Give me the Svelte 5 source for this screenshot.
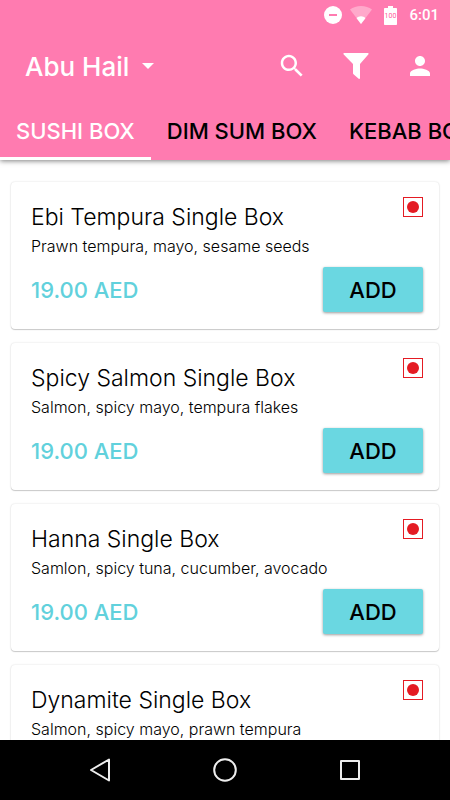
<script lang="ts">
  type MenuItem = {
    id: number;
    name: string;
    description: string;
    price: number;
  };

  const location = 'Abu Hail';
  const tabs = ['SUSHI BOX', 'DIM SUM BOX', 'KEBAB BOX'];

  const items: MenuItem[] = [
    { id: 1, name: 'Ebi Tempura Single Box', description: 'Prawn tempura, mayo, sesame seeds', price: 19 },
    { id: 2, name: 'Spicy Salmon Single Box', description: 'Salmon, spicy mayo, tempura flakes', price: 19 },
    { id: 3, name: 'Hanna Single Box', description: 'Samlon, spicy tuna, cucumber, avocado', price: 19 },
    { id: 4, name: 'Dynamite Single Box', description: 'Salmon, spicy mayo, prawn tempura', price: 19 },
  ];

  let activeTab = $state(0);
  let cart = $state<number[]>([]);

  const addToCart = (id: number): void => {
    cart.push(id);
  };
</script>

<div class="screen">
  <header class="header">
    <div class="status-bar">
      <svg width="18" height="18" viewBox="0 0 18 18" aria-hidden="true">
        <circle cx="9" cy="9" r="9" fill="#fff" />
        <rect x="5" y="8" width="8" height="2" fill="#ff7bb0" />
      </svg>
      <svg width="22" height="18" viewBox="0 0 22 18" aria-hidden="true">
        <path d="M0 3.6C3 1.2 6.8 0 11 0s8 1.2 11 3.6L11 18z" fill="#fff" opacity=".35" />
        <path d="M6.6 12.2C7.7 11 9.300 10.3 11 10.3s3.3.7 4.4 1.9L11 18z" fill="#fff" />
      </svg>
      <svg class="battery" width="13" height="19" viewBox="0 0 13 19" aria-hidden="true">
        <path d="M4 0h5v2h3c.6 0 1 .4 1 1v15c0 .6-.4 1-1 1H1c-.6 0-1-.4-1-1V3c0-.6.4-1 1-1h3z" fill="#fff" />
        <text x="6.5" y="12" text-anchor="middle" font-size="7" fill="#ff5c9c">100</text>
      </svg>
      <span class="time">6:01</span>
    </div>

    <div class="app-bar">
      <button class="location">
        {location}
        <svg width="12" height="6" viewBox="0 0 12 6" aria-hidden="true">
          <path d="M0 0h12L6 6z" fill="#fff" />
        </svg>
      </button>
      <div class="actions">
        <button class="icon-btn" aria-label="Search">
          <svg width="30" height="30" viewBox="0 0 24 24" fill="#fff">
            <path d="M15.5 14h-.79l-.28-.27C15.41 12.59 16 11.11 16 9.5 16 5.91 13.09 3 9.5 3S3 5.91 3 9.5 5.91 16 9.5 16c1.61 0 3.09-.59 4.23-1.57l.27.28v.79l5 4.99L20.49 19l-4.99-5zm-6 0C7.01 14 5 11.99 5 9.5S7.01 5 9.5 5 14 7.01 14 9.5 11.99 14 9.5 14z" />
          </svg>
        </button>
        <button class="icon-btn" aria-label="Filter">
          <svg width="26" height="26" viewBox="0 0 26 26" fill="#fff">
            <path d="M1.200 0h23.600c.9 0 1.100.8.5 1.400L17 11v14c0 .8-.7 1.200-1.300.7l-5.200-4.500c-.3-.3-.5-.6-.5-1V11L.7 1.400C.1.800.3 0 1.200 0z" />
          </svg>
        </button>
        <button class="icon-btn" aria-label="Account">
          <svg width="30" height="30" viewBox="0 0 24 24" fill="#fff">
            <path d="M12 12c2.21 0 4-1.79 4-4s-1.79-4-4-4-4 1.79-4 4 1.79 4 4 4zm0 2c-2.67 0-8 1.34-8 4v2h16v-2c0-2.66-5.33-4-8-4z" />
          </svg>
        </button>
      </div>
    </div>

    <div class="tabs" role="tablist">
      {#each tabs as tab, i}
        <button
          class="tab"
          class:active={i === activeTab}
          role="tab"
          aria-selected={i === activeTab}
          onclick={() => (activeTab = i)}
        >
          {tab}
        </button>
      {/each}
    </div>
  </header>

  <main class="menu">
    {#each items as item (item.id)}
      <article class="card">
        <div class="card-top">
          <div>
            <h2 class="name">{item.name}</h2>
            <p class="description">{item.description}</p>
          </div>
          <svg width="20" height="20" viewBox="0 0 20 20" role="img" aria-label="Non-vegetarian">
            <rect x=".5" y=".5" width="19" height="19" fill="#fff" stroke="#e41b23" />
            <circle cx="10" cy="10" r="6" fill="#e41b23" />
          </svg>
        </div>
        <div class="card-bottom">
          <span class="price">{item.price.toFixed(2)} AED</span>
          <button class="add-btn" onclick={() => addToCart(item.id)}>ADD</button>
        </div>
      </article>
    {/each}
  </main>

  <nav class="nav-bar">
    <button aria-label="Back">
      <svg width="24" height="24" viewBox="0 0 24 24">
        <path d="M21 1.5v21L3 12z" />
      </svg>
    </button>
    <button aria-label="Home">
      <svg width="24" height="24" viewBox="0 0 24 24">
        <circle cx="12" cy="12" r="10.8" />
      </svg>
    </button>
    <button aria-label="Recent apps">
      <svg width="24" height="24" viewBox="0 0 24 24">
        <rect x="3" y="3" width="18" height="18" />
      </svg>
    </button>
  </nav>
</div>

<style>
  :global(body) {
    margin: 0;
    background: #fff;
  }

  .screen {
    display: flex;
    flex-direction: column;
    height: 100vh;
    overflow: hidden;
    font-family: Inter, 'Open Sans', sans-serif;
    color: #000;
  }

  button {
    padding: 0;
    border: none;
    background: none;
    font-family: inherit;
    color: inherit;
    cursor: pointer;
  }

  .header {
    flex: none;
    z-index: 1;
    background: #ff7bb0;
    box-shadow: 0 1px 5px rgba(0, 0, 0, 0.5);
  }

  .status-bar {
    display: flex;
    align-items: center;
    justify-content: flex-end;
    gap: 8px;
    height: 30px;
    padding-right: 11px;
    color: #fff;
    font-family: Roboto, sans-serif;
  }

  .battery {
    margin: 0 4px;
  }

  .time {
    font-size: 15px;
    font-weight: 500;
  }

  .app-bar {
    display: flex;
    align-items: center;
    justify-content: space-between;
    height: 72px;
    padding: 0 10px 0 25px;
  }

  .location {
    display: flex;
    align-items: center;
    gap: 13px;
    color: #fff;
    font-size: 26px;
    font-weight: 500;
  }

  .actions {
    display: flex;
    gap: 24px;
  }

  .icon-btn {
    display: flex;
    align-items: center;
    justify-content: center;
    width: 40px;
    height: 40px;
  }

  .tabs {
    display: flex;
    height: 58px;
    overflow-x: auto;
    scrollbar-width: none;
  }

  .tab {
    flex: none;
    padding: 0 16px;
    border-top: 3px solid transparent;
    border-bottom: 3px solid transparent;
    font-size: 22px;
    font-weight: 500;
    white-space: nowrap;
  }

  .tab.active {
    border-bottom-color: #fff;
    color: #fff;
  }

  .menu {
    flex: 1;
    display: flex;
    flex-direction: column;
    gap: 14px;
    min-height: 0;
    padding: 22px 11px;
    overflow-y: auto;
    scrollbar-width: none;
  }

  .card {
    flex: none;
    padding: 15px 16px 17px 20px;
    background: #fff;
    border-radius: 4px;
    box-shadow: 0 0 2px rgba(0, 0, 0, 0.16), 0 1px 1px rgba(0, 0, 0, 0.18);
  }

  .card-top,
  .card-bottom {
    display: flex;
    justify-content: space-between;
  }

  .card-top {
    align-items: flex-start;
  }

  .card-bottom {
    align-items: center;
    margin-top: 10px;
  }

  .name {
    margin: 6px 0 4px;
    font-size: 23px;
    font-weight: 300;
    line-height: 28px;
  }

  .description {
    margin: 0;
    font-size: 16px;
    font-weight: 300;
    line-height: 22px;
  }

  .price {
    color: #61d1dc;
    font-size: 22px;
    font-weight: 500;
  }

  .add-btn {
    width: 100px;
    height: 45px;
    border-radius: 2px;
    background: #6ad7e1;
    box-shadow: 0 1px 3px rgba(0, 0, 0, 0.4);
    font-size: 22px;
    font-weight: 500;
  }

  .nav-bar {
    flex: none;
    display: flex;
    height: 60px;
    padding: 0 38px;
    background: #000;
  }

  .nav-bar button {
    flex: 1;
    display: flex;
    align-items: center;
    justify-content: center;
  }

  .nav-bar svg {
    fill: none;
    stroke: #eee;
    stroke-width: 2;
    stroke-linejoin: round;
  }
</style>
